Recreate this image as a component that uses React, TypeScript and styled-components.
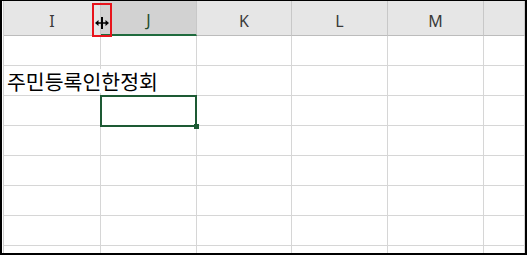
import React from 'react';
import styled, { createGlobalStyle } from 'styled-components';

const GlobalStyle = createGlobalStyle`
  html, body {
    margin: 0;
    padding: 0;
    background: #000000;
  }
`;

const Frame = styled.div`
  width: 527px;
  height: 255px;
  box-sizing: border-box;
  border-style: solid;
  border-color: #000000;
  border-width: 1px 2px 2px 2px;
  background: #ffffff;
  overflow: hidden;
  padding-left: 1px;
`;

const Sheet = styled.div`
  border-left: 1px solid #d0d0d0;
  height: 100%;
  display: flex;
  flex-direction: column;
`;

const HeaderRow = styled.div`
  position: relative;
  display: flex;
  height: 35px;
  flex-shrink: 0;
  background: #e6e6e6;
`;

const HeaderCell = styled.div<{ $w?: number; $selected?: boolean }>`
  box-sizing: border-box;
  width: ${(p) => (p.$w ? `${p.$w}px` : 'auto')};
  flex: ${(p) => (p.$w ? 'none' : '1')};
  display: flex;
  align-items: center;
  justify-content: center;
  padding-top: 5px;
  border-right: 1px solid #c8c8c8;
  border-bottom: ${(p) => (p.$selected ? '2px solid #1f6b3e' : '1px solid #bcbcbc')};
  background: ${(p) => (p.$selected ? '#d2d2d2' : 'transparent')};
  color: ${(p) => (p.$selected ? '#1c4a2b' : '#3a3a3a')};
  font-family: "Noto Sans", "Liberation Sans", sans-serif;
  font-size: 16px;
`;

const Row = styled.div`
  display: flex;
  height: 30px;
  flex-shrink: 0;
`;

const Cell = styled.div<{ $w?: number }>`
  position: relative;
  box-sizing: border-box;
  width: ${(p) => (p.$w ? `${p.$w}px` : 'auto')};
  flex: ${(p) => (p.$w ? 'none' : '1')};
  border-right: 1px solid #d6d6d6;
  border-bottom: 1px solid #d6d6d6;
`;

const CellText = styled.span`
  position: absolute;
  left: 3px;
  bottom: 2px;
  z-index: 2;
  white-space: nowrap;
  background: #ffffff;
  font-family: "Noto Sans CJK KR", "Noto Sans", sans-serif;
  font-size: 20.5px;
  line-height: 24px;
  color: #000000;
`;

const Selection = styled.div`
  position: absolute;
  left: -1px;
  top: -1px;
  right: -1px;
  bottom: -2px;
  border: 2px solid #1d5a34;
  z-index: 3;

  &::after {
    content: '';
    position: absolute;
    right: -4px;
    bottom: -4px;
    width: 5px;
    height: 5px;
    background: #1d5a34;
  }
`;

const ResizeMark = styled.div`
  position: absolute;
  left: 88px;
  top: 2px;
  width: 20px;
  height: 34px;
  box-sizing: border-box;
  border: 2px solid #e8141c;
  z-index: 4;
  display: flex;
  align-items: center;
  justify-content: center;
  padding-top: 6px;
`;

const widths = [97, 96, 95, 96, 96];
const letters = ['I', 'J', 'K', 'L', 'M'];

function ResizeCursor() {
  return (
    <svg width="16" height="14" viewBox="0 0 16 14">
      <rect x="7" y="1" width="2" height="12" fill="#000" />
      <path d="M1 7 L4.5 4 L4.5 6.2 L11.5 6.2 L11.5 4 L15 7 L11.5 10 L11.5 7.8 L4.5 7.8 L4.5 10 Z" fill="#000" />
    </svg>
  );
}

export default function App() {
  const rows = 8;
  return (
    <>
      <GlobalStyle />
      <Frame>
        <Sheet>
          <HeaderRow>
            {letters.map((l, i) => (
              <HeaderCell key={l} $w={widths[i]} $selected={l === 'J'}>
                {l}
              </HeaderCell>
            ))}
            <HeaderCell />
            <ResizeMark>
              <ResizeCursor />
            </ResizeMark>
          </HeaderRow>
          {Array.from({ length: rows }).map((_, r) => (
            <Row key={r}>
              {widths.map((w, c) => (
                <Cell key={c} $w={w}>
                  {r === 1 && c === 0 && <CellText>주민등록인한정회</CellText>}
                  {r === 2 && c === 1 && <Selection />}
                </Cell>
              ))}
              <Cell />
            </Row>
          ))}
        </Sheet>
      </Frame>
    </>
  );
}
